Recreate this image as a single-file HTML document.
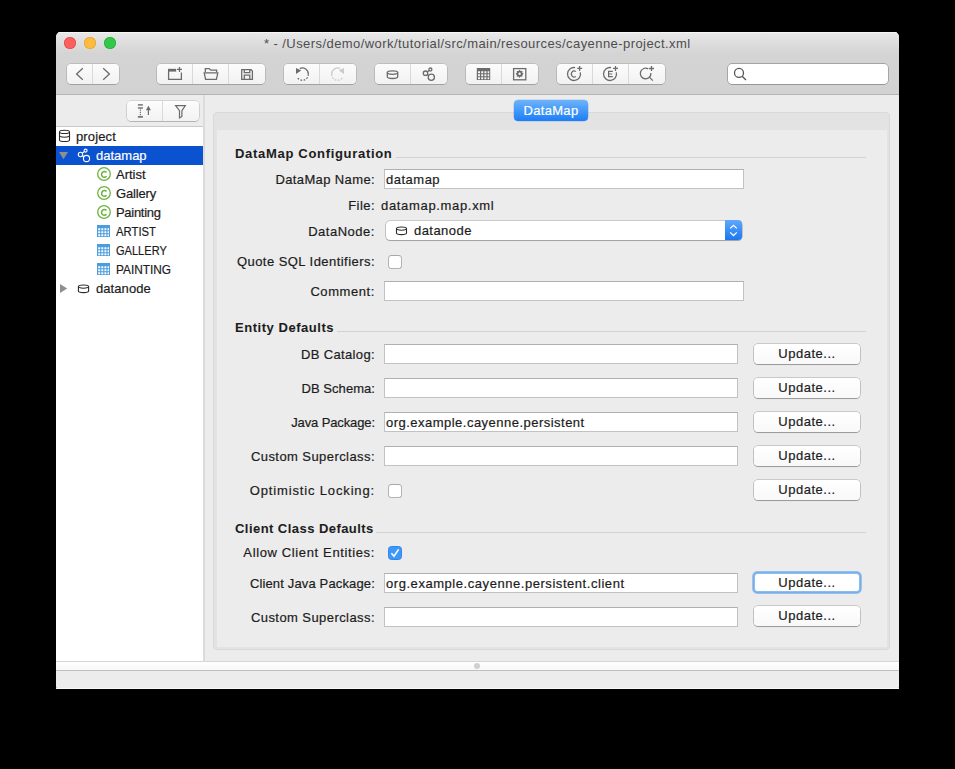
<!DOCTYPE html>
<html><head><meta charset="utf-8">
<style>
*{box-sizing:border-box}
html,body{margin:0;padding:0}
body{width:955px;height:769px;background:#000;position:relative;overflow:hidden;font-family:"Liberation Sans",sans-serif;font-size:13px;color:#1c1c1c}
.a{position:absolute}
.t{position:absolute;white-space:pre;line-height:15px;font-size:13px;-webkit-text-stroke:0.2px currentColor}
.r{text-align:right}
.b{font-weight:bold;-webkit-text-stroke:0.05px currentColor}
#win{position:absolute;left:56px;top:32px;width:843px;height:657px;background:#ececec;border-radius:5px 5px 2px 2px;overflow:hidden}
.light{position:absolute;top:37px;width:12px;height:12px;border-radius:50%}
.seg{position:absolute;top:64px;height:20px;border-radius:4px;background:linear-gradient(#fcfcfc,#f2f2f2);box-shadow:0 0 0 0.6px rgba(0,0,0,.2),0 0.8px 0.6px rgba(0,0,0,.2)}
.seg i{position:absolute;top:0;width:1px;height:20px;background:#d9d9d9}
.tf{position:absolute;height:20px;background:#fff;border:1px solid #c2c2c2;border-top-color:#b0b0b0}
.btn{position:absolute;left:754px;width:106px;height:20px;border-radius:4px;background:linear-gradient(#fff,#f8f8f8);box-shadow:0 0 0 0.6px rgba(0,0,0,.28),0 0.8px 0.8px rgba(0,0,0,.25)}
.btn span{position:absolute;left:0;right:0;top:2px;text-align:center;white-space:pre;line-height:15px;letter-spacing:0.5px;-webkit-text-stroke:0.2px currentColor}
.sep{position:absolute;height:1px;background:#d2d2d2;right:89px}
.cb{position:absolute;left:388px;width:14px;height:14px;border-radius:3.5px;background:#fff;border:1px solid #b3b3b3;border-top-color:#a8a8a8}
</style></head><body>
<div id="win"></div>
<!-- toolbar -->
<div class="a" style="left:56px;top:32px;width:843px;height:63px;border-radius:5px 5px 0 0;background:linear-gradient(#e9e9e9 0px,#dedede 10px,#d4d4d4 22px,#d2d2d2 62px);border-bottom:1px solid #b4b4b4"></div>
<div class="a" style="left:58px;top:32px;width:839px;height:1px;background:rgba(255,255,255,.6)"></div>
<div class="light" style="left:64px;background:#fc605c;box-shadow:inset 0 0 0 0.6px #e0443e"></div>
<div class="light" style="left:84px;background:#fdbc40;box-shadow:inset 0 0 0 0.6px #dea123"></div>
<div class="light" style="left:104px;background:#34c84a;box-shadow:inset 0 0 0 0.6px #1dad2b"></div>
<div class="t" style="left:264px;top:36px;color:#4d4d4d;letter-spacing:0.43px;-webkit-text-stroke:0">* - /Users/demo/work/tutorial/src/main/resources/cayenne-project.xml</div>
<div class="seg" style="left:67px;width:52px"><i style="left:25px"></i></div>
<div class="seg" style="left:157px;width:108px"><i style="left:35px"></i><i style="left:71px"></i></div>
<div class="seg" style="left:284px;width:72px"><i style="left:35px"></i></div>
<div class="seg" style="left:375px;width:72px"><i style="left:35px"></i></div>
<div class="seg" style="left:466px;width:72px"><i style="left:35px"></i></div>
<div class="seg" style="left:557px;width:108px"><i style="left:35px"></i><i style="left:71px"></i></div>
<div class="a" style="left:728px;top:64px;width:160px;height:20px;background:#fff;border-radius:4px;box-shadow:0 0 0 0.7px rgba(0,0,0,.3),0 0.6px 0.6px rgba(0,0,0,.15)"></div>

<!-- sidebar -->
<div class="a" style="left:56px;top:95px;width:147px;height:32px;background:#ececec;border-bottom:1px solid #c9c9c9"></div>
<div class="seg" style="left:127px;top:101px;width:72px"><i style="left:35px"></i></div>
<div class="a" style="left:56px;top:127px;width:147px;height:534px;background:#fff"></div>
<div class="a" style="left:203px;top:95px;width:2px;height:566px;background:#dcdcdc"></div>
<div class="a" style="left:56px;top:146px;width:147px;height:19px;background:#0b52d1"></div>
<div class="t" style="left:76px;top:129px;letter-spacing:0.14px">project</div>
<div class="t" style="left:96px;top:148px;color:#fff">datamap</div>
<div class="t" style="left:116px;top:167px">Artist</div>
<div class="t" style="left:116px;top:186px;letter-spacing:-0.17px">Gallery</div>
<div class="t" style="left:116px;top:205px;letter-spacing:-0.3px">Painting</div>
<div class="t" style="left:116px;top:224px;transform:scaleX(0.87);transform-origin:0 0">ARTIST</div>
<div class="t" style="left:116px;top:243px;transform:scaleX(0.85);transform-origin:0 0">GALLERY</div>
<div class="t" style="left:116px;top:262px;transform:scaleX(0.91);transform-origin:0 0">PAINTING</div>
<div class="t" style="left:96px;top:281px;letter-spacing:0.07px">datanode</div>

<!-- content panel -->
<div class="a" style="left:213px;top:112px;width:677px;height:538px;background:#e3e3e3;border:1px solid #d9d9d9;border-radius:4px"></div>
<div class="a" style="left:217px;top:130px;width:670px;height:517px;background:#ececec"></div>
<div class="a" style="left:514px;top:100px;width:74px;height:21px;border-radius:4px;background:linear-gradient(#6db3fb,#1b7ef6);box-shadow:0 0 0 0.3px rgba(20,90,220,.5)"></div>
<div class="t" style="left:514px;top:103px;width:74px;text-align:center;color:#fff;letter-spacing:0.3px">DataMap</div>

<!-- form -->
<div class="t b" style="left:235px;top:146px;letter-spacing:0.69px">DataMap Configuration</div>
<div class="sep" style="left:396px;top:157px;width:470px"></div>
<div class="t r" style="left:200px;width:175px;top:172px;letter-spacing:0.38px">DataMap Name:</div>
<div class="tf" style="left:384px;top:169px;width:360px"></div>
<div class="t" style="left:386px;top:172px;letter-spacing:0.5px">datamap</div>
<div class="t r" style="left:200px;width:175px;top:198px;letter-spacing:0.44px">File:</div>
<div class="t" style="left:381px;top:198px;letter-spacing:0.67px">datamap.map.xml</div>
<div class="t r" style="left:200px;width:175px;top:224px;letter-spacing:0.52px">DataNode:</div>
<div class="a" style="left:385.5px;top:220.5px;width:356.5px;height:19.8px;border-radius:4px;background:#fff;box-shadow:0 0 0 0.6px rgba(0,0,0,.28),0 0.8px 0.8px rgba(0,0,0,.2)"></div>
<div class="a" style="left:725px;top:220px;width:17px;height:20px;border-radius:0 4px 4px 0;background:linear-gradient(#5fa9fa,#1a77f2)"></div>
<div class="t" style="left:414px;top:223px;letter-spacing:0.45px">datanode</div>
<div class="t r" style="left:200px;width:175px;top:254px;letter-spacing:0.45px">Quote SQL Identifiers:</div>
<div class="cb" style="top:255px"></div>
<div class="t r" style="left:200px;width:175px;top:284px;letter-spacing:0.58px">Comment:</div>
<div class="tf" style="left:384px;top:281px;width:360px"></div>

<div class="t b" style="left:235px;top:320px;letter-spacing:0.54px">Entity Defaults</div>
<div class="sep" style="left:337px;top:331px;width:529px"></div>
<div class="t r" style="left:200px;width:175px;top:347px;letter-spacing:0.36px">DB Catalog:</div>
<div class="tf" style="left:384px;top:344px;width:354px"></div>
<div class="btn" style="top:344px"><span>Update...</span></div>
<div class="t r" style="left:200px;width:175px;top:381px;letter-spacing:0.05px">DB Schema:</div>
<div class="tf" style="left:384px;top:378px;width:354px"></div>
<div class="btn" style="top:378px"><span>Update...</span></div>
<div class="t r" style="left:200px;width:175px;top:415px;letter-spacing:-0.11px">Java Package:</div>
<div class="tf" style="left:384px;top:412px;width:354px"></div>
<div class="t" style="left:386px;top:415px;letter-spacing:0.48px">org.example.cayenne.persistent</div>
<div class="btn" style="top:412px"><span>Update...</span></div>
<div class="t r" style="left:200px;width:175px;top:449px;letter-spacing:0.43px">Custom Superclass:</div>
<div class="tf" style="left:384px;top:446px;width:354px"></div>
<div class="btn" style="top:446px"><span>Update...</span></div>
<div class="t r" style="left:200px;width:175px;top:483px;letter-spacing:0.85px">Optimistic Locking:</div>
<div class="cb" style="top:484px"></div>
<div class="btn" style="top:480px"><span>Update...</span></div>

<div class="t b" style="left:235px;top:521px;letter-spacing:0.45px">Client Class Defaults</div>
<div class="sep" style="left:376px;top:532px;width:490px"></div>
<div class="t r" style="left:200px;width:175px;top:545px;letter-spacing:0.63px">Allow Client Entities:</div>
<div class="cb" style="top:546px;background:#3f98f8;border-color:#2f86f0"></div>
<div class="t r" style="left:200px;width:175px;top:576px;letter-spacing:0.15px">Client Java Package:</div>
<div class="tf" style="left:384px;top:573px;width:354px"></div>
<div class="t" style="left:386px;top:576px;letter-spacing:0.55px">org.example.cayenne.persistent.client</div>
<div class="btn" style="top:574px;left:755px;width:104px;height:17px;border-radius:2.5px;background:#fff;box-shadow:0 0 0 1px #8dbcf0,0 0 0 2.4px #78aee9,0 0 0 3px rgba(140,190,240,.6)"><span style="top:0.5px;left:0;right:0">Update...</span></div>
<div class="t r" style="left:200px;width:175px;top:610px;letter-spacing:0.43px">Custom Superclass:</div>
<div class="tf" style="left:384px;top:607px;width:354px"></div>
<div class="btn" style="top:606px"><span>Update...</span></div>

<!-- splitter/status -->
<div class="a" style="left:56px;top:661px;width:843px;height:10px;background:linear-gradient(#ffffff,#f8f8f8);border-top:1px solid #d6d6d6;border-bottom:1px solid #c0c0c0"></div>
<div class="a" style="left:474px;top:663px;width:6px;height:6px;border-radius:50%;background:#d0d0d0"></div>
<div class="a" style="left:56px;top:688px;width:843px;height:1px;background:#f8f8f8"></div>
<svg class="a" style="left:0;top:0" width="955" height="769" viewBox="0 0 955 769" fill="none" stroke-linecap="butt">
<g stroke="#6b6b6b" stroke-width="1.3">
<!-- nav -->
<path d="M82.8 68.2 L76.6 74 L82.8 79.8"/>
<path d="M103.2 68.2 L109.4 74 L103.2 79.8"/>
<!-- new project -->
<path d="M168.6 71 V79.4 H181.4 V72.6"/>
<path d="M179.5 67 V72 M177 69.4 H182"/>
<!-- open -->
<path d="M205.3 72.2 V68.6 H209.2 L210.8 70.2 H216.6 V72.2"/>
<path d="M204.2 72.8 H217.8 L216.4 79.4 H205.6 Z"/>
<!-- save -->
<path d="M241.7 69.7 H251 L252.4 71.1 V79.4 H241.7 Z"/>
<path d="M244.3 69.7 V72.6 H249.8 V69.7"/>
<path d="M244.3 79.4 V75.2 H249.8 V79.4"/>
<!-- DB -->
<ellipse cx="392.5" cy="72.6" rx="5.2" ry="1.7"/>
<path d="M387.3 72.6 V76.8 A5.2 1.7 0 0 0 397.7 76.8 V72.6"/>
<!-- relationship -->
<circle cx="430.4" cy="69.5" r="1.5"/>
<circle cx="425.5" cy="73.2" r="2.2"/>
<circle cx="431.3" cy="77.3" r="3.1"/>
<path d="M429.2 70.4 L427.3 71.8 M427.2 74.5 L429 75.5"/>
<!-- procedure -->
<rect x="513.6" y="68.6" width="12.2" height="11.2"/>
<!-- create icons -->
<path d="M580.3 72.3 A6.5 6.5 0 1 1 575.1 67.6"/>
<path d="M579.6 66 V71 M577.2 68.4 H582.1"/>
<path d="M575.8 71.6 A2.7 3.1 0 1 0 575.8 76.4" stroke-width="1.25"/>
<path d="M616.3 72.3 A6.5 6.5 0 1 1 611.1 67.6"/>
<path d="M615.5 66 V71 M613.1 68.4 H618"/>
<path d="M612.8 71.3 H608.6 V76.7 H612.8 M608.6 74 H612.2" stroke-width="1.2"/>
<path d="M650.9 73.0 A5.3 5.3 0 1 1 648.3 68.9"/>
<path d="M649.6 77.4 L652.8 80.6"/>
<path d="M651.5 66 V71 M649.1 68.5 H654"/>
<!-- undo -->
<path d="M299.8 68.6 A5.9 5.9 0 0 1 308.3 74.2"/><path d="M308.3 74.2 A5.9 5.9 0 0 1 297.2 77.2" stroke-dasharray="1.7 1.5"/>
</g>
<g stroke="#6b6b6b" stroke-width="1.3" stroke-dasharray="1.6 1.4">
</g>
<g fill="#6b6b6b">
<path d="M168 68.8 H176.2 V71.6 H168 Z"/>
<path d="M296 68.1 L301.2 70.4 L296 73.9 Z"/>
<!-- table -->
<path d="M476.8 67.9 H490.2 V80.1 H476.8 Z M478 71.2 V73.2 H480 V71.2 Z M481.2 71.2 V73.2 H483.2 V71.2 Z M484.4 71.2 V73.2 H486.4 V71.2 Z M487.6 71.2 V73.2 H489.2 V71.2 Z M478 74.2 V76.2 H480 V74.2 Z M481.2 74.2 V76.2 H483.2 V74.2 Z M484.4 74.2 V76.2 H486.4 V74.2 Z M487.6 74.2 V76.2 H489.2 V74.2 Z M478 77.2 V79.2 H480 V77.2 Z M481.2 77.2 V79.2 H483.2 V77.2 Z M484.4 77.2 V79.2 H486.4 V77.2 Z M487.6 77.2 V79.2 H489.2 V77.2 Z" fill-rule="evenodd"/>
<!-- gear -->
<path d="M519.60 69.70 L520.71 71.12 L522.50 70.90 L522.28 72.69 L523.70 73.80 L522.28 74.91 L522.50 76.70 L520.71 76.48 L519.60 77.90 L518.49 76.48 L516.70 76.70 L516.92 74.91 L515.50 73.80 L516.92 72.69 L516.70 70.90 L518.49 71.12 Z M519.6 72.6 A1.2 1.2 0 1 0 519.6 75.0 A1.2 1.2 0 1 0 519.6 72.6 Z" fill-rule="evenodd"/>

<!-- sidebar toolbar -->
<rect x="137.9" y="104.2" width="5" height="1.4"/>
<rect x="137.9" y="107.3" width="5" height="1.4"/>
<rect x="137.9" y="116.1" width="5" height="1.6"/>
<path d="M148.4 105.8 L150.9 110.2 H145.9 Z"/>
</g>
<g stroke="#6b6b6b" stroke-width="1.2">
<path d="M148.4 109.5 V115"/>
<path d="M140.4 109.6 V115.8" stroke-dasharray="1.2 1"/>
<path d="M175.6 105.6 H185.3 L181.9 110.6 V116.4 L179.5 118 V110.6 Z" stroke-linejoin="miter"/>
</g>
<!-- redo -->
<g stroke="#cacaca" stroke-width="1.3">
<path d="M340.2 68.6 A5.9 5.9 0 0 0 331.7 74.2"/><path d="M331.7 74.2 A5.9 5.9 0 0 0 342.8 77.2" stroke-dasharray="1.7 1.5"/>
</g>
<path fill="#cacaca" d="M344 68.1 L338.8 70.4 L344 73.9 Z"/>
<!-- search -->
<g stroke="#555" stroke-width="1.3">
<circle cx="739" cy="72.9" r="4.5"/>
<path d="M742.2 76.2 L746 80"/>
</g>
<!-- tree -->
<g stroke="#2b2b2b" stroke-width="1.1">
<ellipse cx="64.5" cy="131.9" rx="5" ry="1.6"/>
<path d="M59.5 131.9 V139.9 A5 1.6 0 0 0 69.5 139.9 V131.9"/>
<path d="M59.5 135.6 A5 1.6 0 0 0 69.5 135.6"/>
<ellipse cx="83.5" cy="286.6" rx="5.1" ry="1.6"/>
<path d="M78.4 286.6 V291 A5.1 1.6 0 0 0 88.6 291 V286.6"/>
<ellipse cx="401.5" cy="228.6" rx="5" ry="1.6"/>
<path d="M396.5 228.6 V233 A5 1.6 0 0 0 406.5 233 V228.6"/>
</g>
<path fill="#8f8f8f" d="M59 152 H68 L63.5 159.3 Z"/>
<path fill="#8f8f8f" d="M60 284 L67.2 288.5 L60 293 Z"/>
<g stroke="#fff" stroke-width="1.1">
<circle cx="85.6" cy="150.6" r="1.5"/>
<circle cx="80.5" cy="154.5" r="2.2"/>
<circle cx="86.5" cy="158.5" r="3.1"/>
<path d="M84.4 151.5 L82.3 153.1 M82.3 155.8 L84.1 156.8"/>
</g>
<g stroke="#6cb33f" stroke-width="1.3">
<circle cx="104" cy="174" r="6.3"/>
<circle cx="104" cy="193" r="6.3"/>
<circle cx="104" cy="212" r="6.3"/>
</g>
<g stroke="#6cb33f" stroke-width="1.5">
<path d="M106.5 172.6 A2.8 2.8 0 1 0 106.5 176.2"/>
<path d="M106.5 191.6 A2.8 2.8 0 1 0 106.5 195.2"/>
<path d="M106.5 210.6 A2.8 2.8 0 1 0 106.5 214.2"/>
</g>
<g fill="#4b9ddd" fill-rule="evenodd">
<path id="tbl" d="M97 225 H110 V237 H97 Z M98.2 228.2 V230.2 H100.2 V228.2 Z M101.3 228.2 V230.2 H103.3 V228.2 Z M104.4 228.2 V230.2 H106.4 V228.2 Z M107.5 228.2 V230.2 H109 V228.2 Z M98.2 231.2 V233.2 H100.2 V231.2 Z M101.3 231.2 V233.2 H103.3 V231.2 Z M104.4 231.2 V233.2 H106.4 V231.2 Z M107.5 231.2 V233.2 H109 V231.2 Z M98.2 234.2 V236.2 H100.2 V234.2 Z M101.3 234.2 V236.2 H103.3 V234.2 Z M104.4 234.2 V236.2 H106.4 V234.2 Z M107.5 234.2 V236.2 H109 V234.2 Z"/>
<use href="#tbl" y="19"/>
<use href="#tbl" y="38"/>
</g>
<!-- combo arrows -->
<g stroke="#fff" stroke-width="1.3">
<path d="M730.2 228.4 L733.5 225.3 L736.8 228.4"/>
<path d="M730.2 232.4 L733.5 235.5 L736.8 232.4"/>
<path d="M391.4 553.3 L394 556.2 L398.6 549.4" stroke-width="1.6"/>
</g>
</svg>
</body></html>
